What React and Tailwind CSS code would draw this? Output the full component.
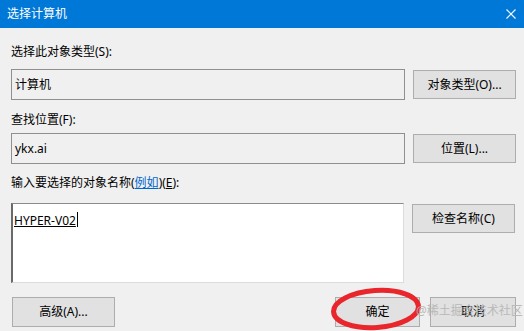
export default function App() {
  const btn =
    "h-[29px] bg-[#e1e1e1] border border-[#adadad] flex items-center justify-center leading-none";
  return (
    <div className="w-[524px] h-[331px] bg-[#f0f0f0] relative overflow-hidden font-['Noto_Sans','Noto_Sans_CJK_SC',sans-serif] text-[12px] text-black">
      <div className="h-[28px] bg-[#0078d7] flex items-center justify-between pl-[7px] pr-[6px] text-white">
        <span className="leading-none">选择计算机</span>
        <svg width="12" height="12" viewBox="0 0 12 12" className="mr-[1px]">
          <path d="M1.5 1.5 L10.5 10.5 M10.5 1.5 L1.5 10.5" stroke="#ffffff" strokeWidth="1.1" fill="none" />
        </svg>
      </div>

      <div className="pl-[11px] pr-[8px]">
        <div className="mt-[16px] h-[16px] leading-[16px]">选择此对象类型(S):</div>
        <div className="mt-[9px] flex items-center gap-[8px]">
          <div className="w-[394px] h-[31px] border border-[#8f8f8f] bg-[#f0f0f0] flex items-center pl-[3px] leading-none">
            计算机
          </div>
          <div className={btn + " w-[103px]"}>对象类型(O)...</div>
        </div>

        <div className="mt-[12px] h-[16px] leading-[16px]">查找位置(F):</div>
        <div className="mt-[5px] flex items-center gap-[8px]">
          <div className="w-[394px] h-[31px] border border-[#8f8f8f] bg-[#f0f0f0] flex items-center pl-[3px] leading-none">
            ykx.ai
          </div>
          <div className={btn + " w-[103px]"}>位置(L)...</div>
        </div>

        <div className="mt-[11px] h-[16px] leading-[16px]">
          输入要选择的对象名称(
          <span className="text-[#0066cc] underline">例如</span>)(<span className="underline">E</span>):
        </div>
        <div className="mt-[12px] flex items-start gap-[8px]">
          <div className="w-[393px] h-[80px] bg-white border-t border-t-[#8a8a8a] border-l-2 border-l-[#6a6a6a] border-r border-r-[#dcdcdc] border-b border-b-[#dcdcdc] pl-[1px] pt-[8px]">
            <span className="underline leading-[14px] inline-block">HYPER-V02</span>
            <span className="inline-block w-[1px] h-[15px] bg-black align-top ml-[1px]"></span>
          </div>
          <div className={btn + " w-[103px] mt-[1px]"}>检查名称(C)</div>
        </div>

        <div className="mt-[14px] flex items-center">
          <div className={btn + " w-[103px] h-[30px] ml-[1px]"}>高级(A)...</div>
          <div className="flex-1"></div>
          <div className={btn + " w-[85px] h-[30px]"}>确定</div>
          <div className={btn + " w-[86px] h-[30px] ml-[10px]"}>取消</div>
        </div>
      </div>

      <svg
        className="absolute left-0 top-0 pointer-events-none"
        width="524"
        height="331"
        viewBox="0 0 524 331"
      >
        <ellipse
          cx="376"
          cy="309"
          rx="42.5"
          ry="18.5"
          transform="rotate(-4 376 309)"
          fill="none"
          stroke="#e8262b"
          strokeWidth="5"
        />
      </svg>
      <div className="absolute left-[416px] top-[303px] text-[12px] leading-[16px] text-[#b5b5b5] opacity-90 pointer-events-none">
        @稀土掘金技术社区
      </div>
    </div>
  );
}
